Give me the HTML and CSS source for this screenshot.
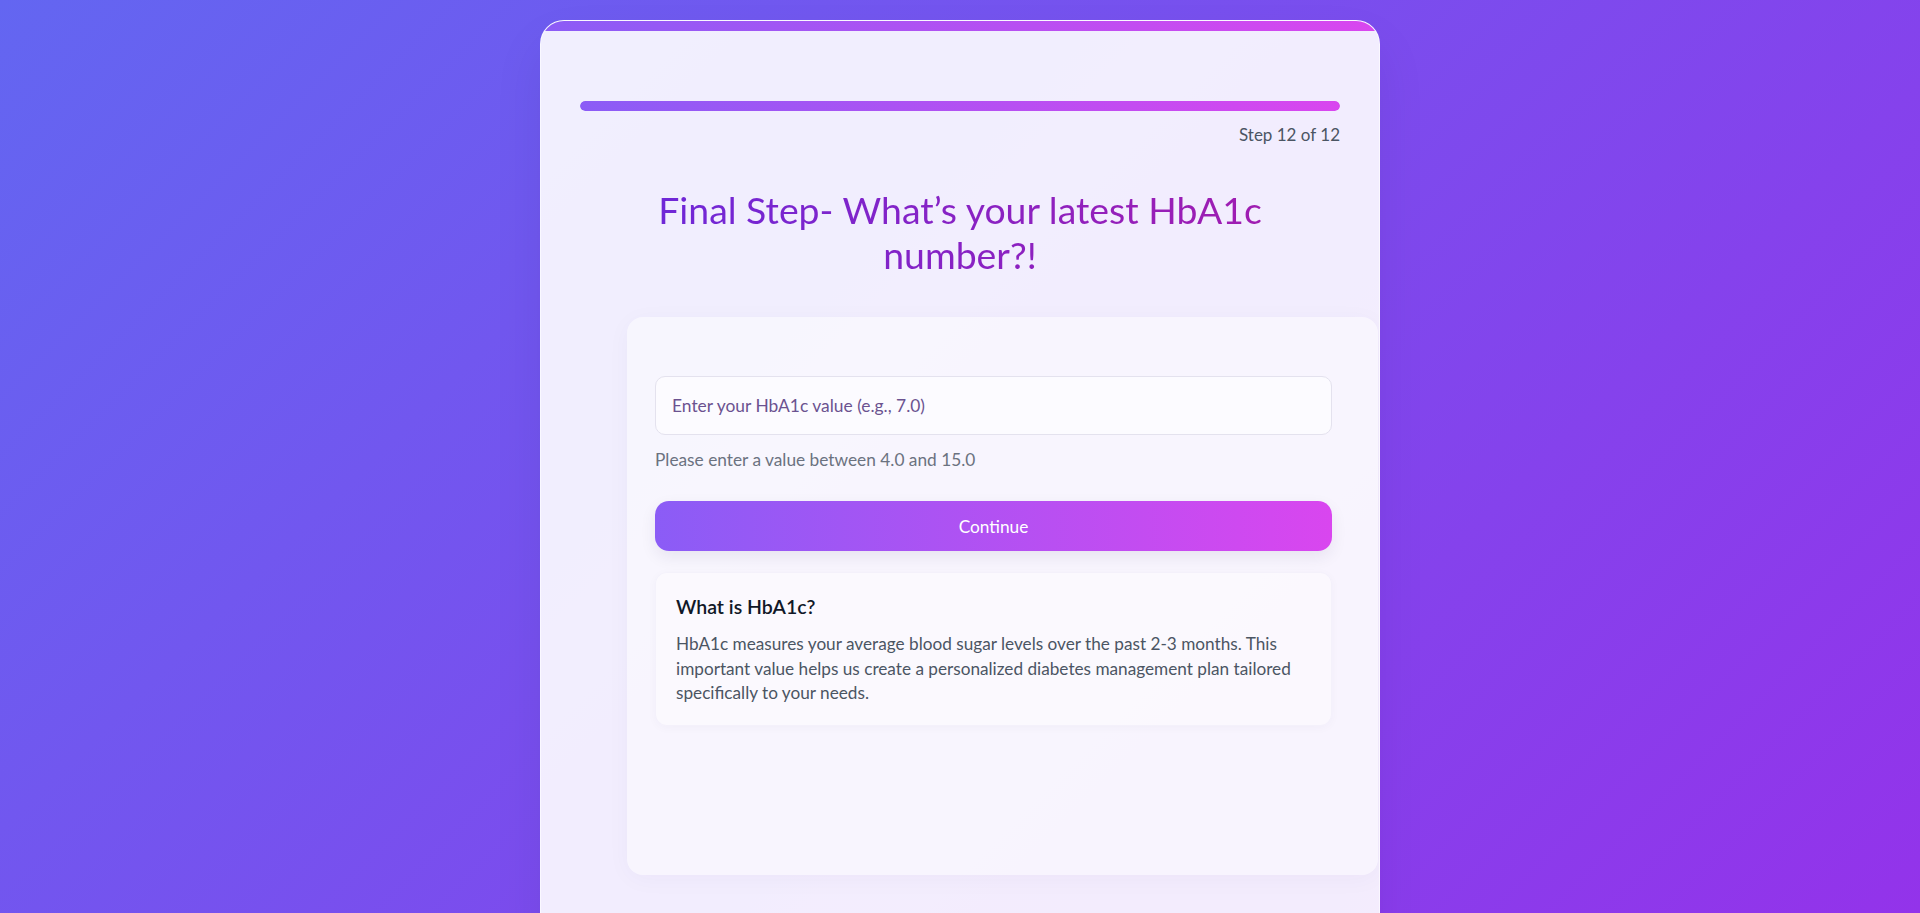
FILE: index.html
```html
<!DOCTYPE html>
<html lang="en">
<head>
<meta charset="utf-8">
<title>HbA1c – Final Step</title>
<link rel="stylesheet" href="styles.css">
</head>
<body>
<main class="card">
  <div class="card-accent"></div>
  <div class="card-body">
    <div class="progress"><div class="progress-fill" style="width:100%"></div></div>
    <p class="step-label">Step 12 of 12</p>
    <h1 class="title">Final Step- What’s your latest HbA1c number?!</h1>
    <section class="panel">
      <input class="field" type="text" placeholder="Enter your HbA1c value (e.g., 7.0)">
      <p class="hint">Please enter a value between 4.0 and 15.0</p>
      <button class="btn" type="button">Continue</button>
      <div class="info">
        <h2 class="info-title">What is HbA1c?</h2>
        <p class="info-text">HbA1c measures your average blood sugar levels over the past 2-3 months. This important value helps us create a personalized diabetes management plan tailored specifically to your needs.</p>
      </div>
    </section>
  </div>
</main>
</body>
</html>
```
FILE: styles.css
```css
* {
  box-sizing: border-box;
}

html,
body {
  margin: 0;
  height: 100%;
  overflow: hidden;
}

body {
  font-family: "Segoe UI", Lato, "Open Sans", sans-serif;
  background: linear-gradient(135deg, #6366f1 0%, #9333ea 100%);
  display: flex;
  justify-content: center;
  align-items: flex-start;
  padding-top: 20px;
}

.card {
  width: 840px;
  min-height: 920px;
  flex-shrink: 0;
  background: rgba(255, 255, 255, 0.9);
  border: 1px solid rgba(255, 255, 255, 0.6);
  border-radius: 24px;
  overflow: hidden;
  box-shadow: 0 25px 50px rgba(30, 0, 80, 0.08);
}

.card-accent {
  height: 10px;
  background: linear-gradient(90deg, #8b5cf6, #d946ef);
}

.card-body {
  padding: 70px 39px 0;
}

.progress {
  height: 10px;
  border-radius: 5px;
  background: #e9e5f7;
  overflow: hidden;
}

.progress-fill {
  height: 100%;
  border-radius: 5px;
  background: linear-gradient(90deg, #8b5cf6, #d946ef);
}

.step-label {
  margin: 12px 0 0;
  text-align: right;
  font-size: 17px;
  line-height: 24px;
  color: #4b5563;
}

.title {
  margin: 40px auto 0;
  max-width: 660px;
  text-align: center;
  font-size: 37.4px;
  line-height: 45px;
  font-weight: 400;
  background: linear-gradient(90deg, #6d28d9, #a21caf);
  -webkit-background-clip: text;
  background-clip: text;
  color: transparent;
}

.panel {
  margin: 40px -38px 0 47px;
  min-height: 558px;
  padding: 59px 46px 40px 28px;
  background: rgba(255, 255, 255, 0.45);
  border-radius: 16px;
  box-shadow: 0 4px 24px rgba(60, 20, 120, 0.035);
}

.field {
  display: block;
  width: 100%;
  height: 59px;
  padding: 0 16px;
  font-family: inherit;
  font-size: 17.4px;
  color: #374151;
  background: rgba(255, 255, 255, 0.6);
  border: 1px solid #e4e2ee;
  border-radius: 10px;
  outline: none;
}

.field::placeholder {
  color: #6b5290;
  opacity: 1;
}

.hint {
  margin: 13px 0 0;
  font-size: 17.3px;
  line-height: 24px;
  color: #6b7280;
}

.btn {
  display: flex;
  align-items: center;
  justify-content: center;
  width: 100%;
  height: 50px;
  margin-top: 29px;
  padding: 0;
  border: none;
  border-radius: 14px;
  font-family: inherit;
  font-size: 17.3px;
  color: #ffffff;
  background: linear-gradient(90deg, #8b5cf6, #d946ef);
  box-shadow: 0 6px 16px rgba(40, 20, 80, 0.08);
  cursor: pointer;
}

.info {
  margin-top: 21px;
  padding: 21px 18px 19px 20px;
  background: rgba(255, 255, 255, 0.4);
  border: 1px solid rgba(120, 90, 200, 0.05);
  border-radius: 12px;
  box-shadow: 0 2px 10px rgba(40, 20, 80, 0.03);
}

.info-title {
  margin: 0;
  font-size: 19.5px;
  line-height: 26px;
  font-weight: 600;
  color: #111827;
}

.info-text {
  margin: 12px 0 0;
  font-size: 17.2px;
  line-height: 24.5px;
  color: #4b5563;
}
```
